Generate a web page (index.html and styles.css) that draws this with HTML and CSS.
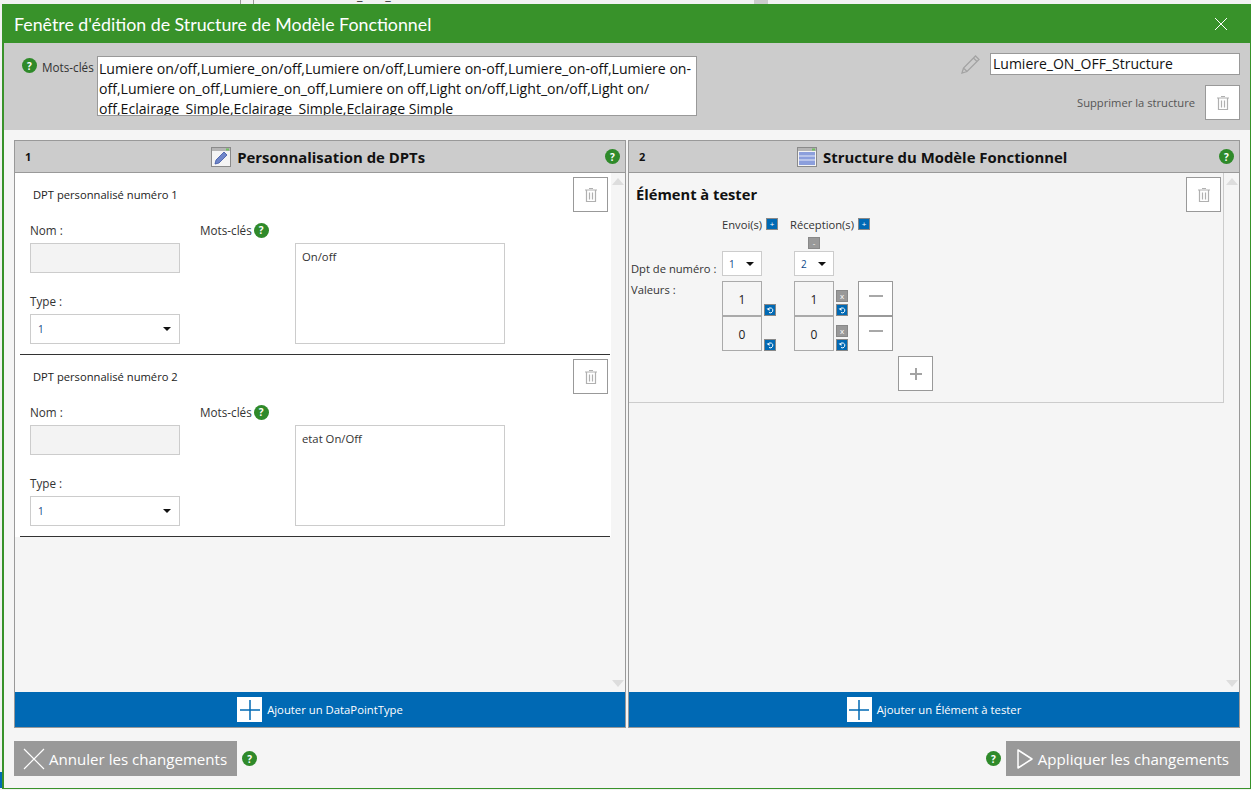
FILE: index.html
```html
<!DOCTYPE html>
<html lang="fr">
<head>
  <meta charset="UTF-8">
  <title>Fenêtre d'édition de Structure de Modèle Fonctionnel</title>
  <link rel="stylesheet" href="styles.css">
</head>
<body>

<svg class="sprite" width="0" height="0">
  <symbol id="trash" viewBox="0 0 14 16">
    <path d="M5 1.500h4M1 3h12M2.500 3v11.500h9V3M5.500 5.500v7M8.500 5.500v7" fill="none" stroke="currentColor" stroke-width="1.200"/>
  </symbol>
  <symbol id="undo" viewBox="0 0 12 12">
    <path d="M4 5.500a2.500 2.500 0 1 1 1 3" fill="none" stroke="#fff" stroke-width="1"/>
    <path d="M2.500 4.500h3v2.500z" fill="#fff"/>
  </symbol>
</svg>

<div class="behind">
  <span class="behind-line"></span>
  <span class="behind-line behind-line-2"></span>
  <span class="behind-text">M1 Lumiere ON_OFF_1</span>
  <span class="behind-box"></span>
</div>

<div class="window">
  <header class="titlebar">
    <h1>Fenêtre d'édition de Structure de Modèle Fonctionnel</h1>
    <svg class="close" width="14" height="14" viewBox="0 0 14 14"><path d="M1 1l12 12M13 1L1 13" stroke="#fff" fill="none"/></svg>
  </header>

  <section class="meta">
    <span class="help help-big">?</span>
    <span class="meta-label">Mots-clés</span>
    <div class="meta-keywords">Lumiere on/off,Lumiere_on/off,Lumiere on/off,Lumiere on-off,Lumiere_on-off,Lumiere on-<br>off,Lumiere on_off,Lumiere_on_off,Lumiere on off,Light on/off,Light_on/off,Light on/<br>off,Eclairage_Simple,Eclairage_Simple,Eclairage Simple</div>
    <div class="meta-side">
      <div class="meta-name">
        <svg width="20" height="20" viewBox="0 0 20 20"><path d="M1 19l1.500-5L14.500 2l3.500 3.500L6 17.500zM2.500 14L6 17.500M12.500 4l3.500 3.500" fill="none" stroke="#a3a3a3" stroke-width="1.300"/></svg>
        <div class="name-input">Lumiere_ON_OFF_Structure</div>
      </div>
      <div class="meta-delete">
        <span>Supprimer la structure</span>
        <button class="icon-btn"><svg width="14" height="16"><use href="#trash"/></svg></button>
      </div>
    </div>
  </section>

  <main class="panels">

    <section class="panel">
      <div class="panel-head">
        <span class="panel-num">1</span>
        <div class="panel-title">
          <svg width="20" height="20" viewBox="0 0 20 20">
            <rect x=".5" y=".5" width="19" height="19" fill="#f4f4f4" stroke="#8a8a8a"/>
            <rect x="1" y="1" width="18" height="3" fill="#b5b5b5"/>
            <rect x="15" y="1.500" width="3" height="2" fill="#6fbf5f"/>
            <path d="M4 17l1-4 8-8 3 3-8 8z" fill="#6f86c9" stroke="#3d55a5" stroke-width=".8"/>
          </svg>
          <h2>Personnalisation de DPTs</h2>
        </div>
        <span class="help">?</span>
      </div>
      <div class="panel-body">
        <div class="panel-content">

          <div class="dpt-wrap">
            <div class="dpt">
              <div class="dpt-top">
                <span class="dpt-name">DPT personnalisé numéro 1</span>
                <button class="icon-btn"><svg width="14" height="16"><use href="#trash"/></svg></button>
              </div>
              <div class="dpt-form">
                <label class="field-label">Nom :</label>
                <label class="field-label kw-label">Mots-clés <span class="help">?</span></label>
                <div class="name-box"></div>
                <div class="kw-box">On/off</div>
                <label class="field-label type-label">Type :</label>
                <div class="select type-select"><span>1</span><i class="caret"></i></div>
              </div>
            </div>
          </div>

          <div class="dpt-wrap">
            <div class="dpt">
              <div class="dpt-top">
                <span class="dpt-name">DPT personnalisé numéro 2</span>
                <button class="icon-btn"><svg width="14" height="16"><use href="#trash"/></svg></button>
              </div>
              <div class="dpt-form">
                <label class="field-label">Nom :</label>
                <label class="field-label kw-label">Mots-clés <span class="help">?</span></label>
                <div class="name-box"></div>
                <div class="kw-box">etat On/Off</div>
                <label class="field-label type-label">Type :</label>
                <div class="select type-select"><span>1</span><i class="caret"></i></div>
              </div>
            </div>
          </div>

        </div>
        <div class="scrollbar"><i class="arrow-up"></i><i class="arrow-down"></i></div>
      </div>
      <button class="add-bar">
        <span class="add-icon"><svg width="20" height="20" viewBox="0 0 20 20"><path d="M10 0v20M0 10h20" stroke="#0069b4" stroke-width="1.500"/></svg></span>
        Ajouter un DataPointType
      </button>
    </section>

    <section class="panel panel-right">
      <div class="panel-head">
        <span class="panel-num">2</span>
        <div class="panel-title">
          <svg width="20" height="20" viewBox="0 0 20 20">
            <rect x=".5" y=".5" width="19" height="19" fill="#f4f4f4" stroke="#8a8a8a"/>
            <rect x="1" y="1" width="18" height="3" fill="#b5b5b5"/>
            <rect x="15" y="1.500" width="3" height="2" fill="#6fbf5f"/>
            <rect x="2" y="5" width="16" height="13" fill="#8c9fdc"/>
            <path d="M2 9h16M2 13h16" stroke="#e6eaf7"/>
          </svg>
          <h2>Structure du Modèle Fonctionnel</h2>
        </div>
        <span class="help">?</span>
      </div>
      <div class="panel-body">
        <div class="panel-content">
          <div class="element">
            <div class="element-top">
              <h3>Élément à tester</h3>
              <button class="icon-btn"><svg width="14" height="16"><use href="#trash"/></svg></button>
            </div>
            <div class="matrix">
              <div class="col-head col-a">Envoi(s) <button class="tiny tiny-blue">+</button></div>
              <div class="col-head col-b">Réception(s) <button class="tiny tiny-blue">+</button></div>
              <button class="tiny tiny-gray remove-col">-</button>

              <span class="m-label dpt-label">Dpt de numéro :</span>
              <div class="select num-select col-a"><span>1</span><i class="caret"></i></div>
              <div class="select num-select col-b"><span>2</span><i class="caret"></i></div>

              <span class="m-label val-label">Valeurs :</span>

              <div class="val col-a r1">1</div>
              <div class="val-side side-a r1"><button class="tiny tiny-blue"><svg width="12" height="12"><use href="#undo"/></svg></button></div>
              <div class="val col-b r1">1</div>
              <div class="val-side side-b r1">
                <button class="tiny tiny-gray tiny-x">x</button>
                <button class="tiny tiny-blue"><svg width="12" height="12"><use href="#undo"/></svg></button>
              </div>
              <button class="icon-btn row-btn col-c r1"><i class="dash"></i></button>

              <div class="val col-a r2">0</div>
              <div class="val-side side-a r2"><button class="tiny tiny-blue"><svg width="12" height="12"><use href="#undo"/></svg></button></div>
              <div class="val col-b r2">0</div>
              <div class="val-side side-b r2">
                <button class="tiny tiny-gray tiny-x">x</button>
                <button class="tiny tiny-blue"><svg width="12" height="12"><use href="#undo"/></svg></button>
              </div>
              <button class="icon-btn row-btn col-c r2"><i class="dash"></i></button>

              <button class="icon-btn add-row">
                <svg width="14" height="14" viewBox="0 0 14 14"><path d="M7 1v12M1 7h12" stroke="#a3a3a3" stroke-width="2"/></svg>
              </button>
            </div>
          </div>
        </div>
        <div class="scrollbar"><i class="arrow-up"></i><i class="arrow-down"></i></div>
      </div>
      <button class="add-bar">
        <span class="add-icon"><svg width="20" height="20" viewBox="0 0 20 20"><path d="M10 0v20M0 10h20" stroke="#0069b4" stroke-width="1.500"/></svg></span>
        Ajouter un Élément à tester
      </button>
    </section>

  </main>

  <footer class="actions">
    <div class="action-group">
      <button class="action">
        <svg width="22" height="22" viewBox="0 0 22 22"><path d="M1 1l20 20M21 1L1 21" stroke="#fff" stroke-width="1.200" fill="none"/></svg>
        Annuler les changements
      </button>
      <span class="help">?</span>
    </div>
    <div class="action-group">
      <span class="help">?</span>
      <button class="action action-apply">
        <svg width="18" height="22" viewBox="0 0 18 22"><path d="M2 2v18l14-9z" stroke="#fff" stroke-width="1.500" stroke-linejoin="round" fill="none"/></svg>
        Appliquer les changements
      </button>
    </div>
  </footer>
</div>

</body>
</html>
```

FILE: styles.css
```css
* {
  box-sizing: border-box;
}
html, body {
  height: 100%;
}
body {
  margin: 0;
  overflow: hidden;
  font-family: "Open Sans", "Liberation Sans", sans-serif;
  font-size: 11.200px;
  color: #222;
  background: linear-gradient(#0069b4, #0069b4) 0 772px / 2px 16px no-repeat #f2f2f2;
}
button {
  font-family: inherit;
  padding: 0;
  cursor: pointer;
}
.sprite {
  display: block;
}

/* what shows of the window behind */
.behind {
  height: 4px;
  overflow: hidden;
  display: flex;
  padding-left: 240px;
}
.behind-line {
  width: 1px;
  background: #999;
}
.behind-line-2 {
  margin-left: 12px;
}
.behind-text {
  width: 489px;
  margin: -13px 0 0 11px;
  font-size: 12.500px;
  line-height: 18px;
}
.behind-box {
  width: 14px;
  background: #ccc;
}

.window {
  height: 785px;
  margin-left: 2px;
  display: flex;
  flex-direction: column;
  border: solid #38922a;
  border-width: 0 1px 1px 2px;
  background: #f5f5f5;
}
.titlebar {
  height: 39px;
  flex: none;
  display: flex;
  align-items: center;
  justify-content: space-between;
  padding: 0 22px 0 10px;
  background: #38922a;
  color: #fff;
}
.titlebar h1 {
  margin: 0;
  font-family: Lato, "Open Sans", sans-serif;
  font-size: 17.800px;
  font-weight: 400;
}

.help {
  display: inline-flex;
  flex: none;
  width: 15px;
  height: 15px;
  align-items: center;
  justify-content: center;
  border-radius: 50%;
  background: #2f8a2a;
  color: #fff;
  font-size: 10px;
  font-weight: 700;
  line-height: 1;
}

/* keywords + name strip */
.meta {
  height: 87px;
  flex: none;
  display: flex;
  padding: 13px 10px 0 18px;
  background: #ccc;
}
.meta .help-big {
  margin-top: 2px;
}
.meta-label {
  margin: 3px 3px 0 5px;
  width: 52px;
  font-size: 11.700px;
  white-space: nowrap;
  color: #333;
}
.meta-keywords {
  width: 600px;
  height: 60px;
  padding: 2px 0 0 1px;
  overflow: hidden;
  background: #fff;
  border: 1px solid #999;
  font-size: 14.100px;
  line-height: 20px;
  white-space: nowrap;
  color: #111;
}
.meta-side {
  margin-left: auto;
  margin-top: -3px;
}
.meta-name {
  display: flex;
  align-items: center;
  justify-content: flex-end;
  gap: 9px;
}
.name-input {
  width: 250px;
  height: 22px;
  padding-left: 2px;
  background: #fff;
  border: 1px solid #999;
  font-size: 14px;
  line-height: 20px;
  color: #111;
}
.meta-delete {
  display: flex;
  justify-content: flex-end;
  align-items: center;
  gap: 10px;
  margin-top: 10px;
  font-size: 11.200px;
  color: #555;
}

.icon-btn {
  width: 35px;
  height: 35px;
  flex: none;
  display: flex;
  align-items: center;
  justify-content: center;
  background: #fff;
  border: 1px solid #999;
  color: #b0b0b0;
}

/* the two panels */
.panels {
  flex: 1;
  min-height: 0;
  display: flex;
  gap: 2px;
  padding: 10px 10px 13px;
}
.panel {
  width: 612px;
  display: flex;
  flex-direction: column;
  border: 1px solid #999;
}
.panel-head {
  height: 32px;
  flex: none;
  display: flex;
  align-items: center;
  justify-content: space-between;
  padding: 0 5px 0 10px;
  background: #ccc;
  border-bottom: 1px solid #999;
}
.panel-num {
  font-size: 11px;
  font-weight: 700;
  color: #111;
}
.panel-title {
  display: flex;
  align-items: center;
  gap: 6px;
}
.panel-title h2 {
  margin: 0;
  font-size: 14.900px;
  font-weight: 700;
  color: #111;
}
.panel-body {
  flex: 1;
  min-height: 0;
  display: flex;
}
.panel-content {
  flex: 1;
}
.scrollbar {
  width: 14px;
  flex: none;
  display: flex;
  flex-direction: column;
  justify-content: space-between;
  align-items: center;
  padding: 5px 0;
}
.panel-right .scrollbar {
  width: 15px;
}
.arrow-up, .arrow-down {
  width: 0;
  height: 0;
  border-left: 6px solid transparent;
  border-right: 6px solid transparent;
}
.arrow-up {
  border-bottom: 7px solid #ddd;
}
.arrow-down {
  border-top: 7px solid #ddd;
}
.add-bar {
  height: 35px;
  flex: none;
  display: flex;
  align-items: center;
  justify-content: center;
  gap: 5px;
  border: none;
  background: #0069b4;
  color: #fff;
  font-size: 11.300px;
}
.add-icon {
  width: 25px;
  height: 25px;
  display: flex;
  align-items: center;
  justify-content: center;
  background: #fff;
}

/* DPT rows, left panel */
.dpt-wrap {
  height: 182px;
  padding: 0 1px 0 5px;
  background: #fff;
}
.dpt {
  height: 100%;
  padding-top: 4px;
  border-bottom: 1px solid #333;
}
.dpt-top {
  height: 35px;
  display: flex;
  align-items: center;
  justify-content: space-between;
  padding: 0 2px 0 13px;
}
.dpt-form {
  display: grid;
  grid-template-columns: 150px 20px 95px 210px;
  grid-template-rows: 31px 30px 41px 30px;
  margin-left: 10px;
}
.field-label {
  align-self: end;
  padding-bottom: 4px;
  line-height: 18px;
  font-size: 11.700px;
  color: #333;
}
.kw-label {
  display: flex;
  align-items: center;
  gap: 2px;
  grid-column: 3;
  grid-row: 1;
}
.type-label {
  grid-column: 1;
  grid-row: 3;
}
.name-box {
  grid-column: 1;
  grid-row: 2;
  background: #f3f3f3;
  border: 1px solid #ccc;
}
.kw-box {
  grid-column: 4;
  grid-row: 2 / 5;
  padding: 5px 6px;
  background: #fff;
  border: 1px solid #ccc;
  font-size: 11.300px;
  color: #333;
}
.select {
  display: flex;
  align-items: center;
  justify-content: space-between;
  background: #fff;
  border: 1px solid #ccc;
  color: #0f4a8a;
  font-size: 10px;
}
.type-select {
  grid-column: 1;
  grid-row: 4;
  padding: 0 8px 0 7px;
}
.caret {
  width: 0;
  height: 0;
  border-left: 4px solid transparent;
  border-right: 4px solid transparent;
  border-top: 4px solid #111;
}

/* element, right panel */
.element {
  height: 230px;
  padding: 4px 2px 0 2px;
  border: solid #ccc;
  border-width: 0 1px 1px 0;
}
.element-top {
  height: 35px;
  display: flex;
  align-items: center;
  justify-content: space-between;
  padding-left: 5px;
}
.element-top h3 {
  margin: 0 0 2px;
  font-size: 14.700px;
  font-weight: 700;
  color: #111;
}
.matrix {
  display: grid;
  grid-template-columns: 91px 40px 32px 40px 24px 35px 5px 35px;
  grid-template-rows: 3px 18px 18px 30px 35px 35px 5px 35px;
}
.col-a {
  grid-column: 2;
}
.col-b {
  grid-column: 4;
}
.col-c {
  grid-column: 6;
}
.r1 {
  grid-row: 5;
}
.r2 {
  grid-row: 6;
}
.col-head {
  grid-row: 2;
  display: flex;
  align-items: center;
  gap: 4px;
  white-space: nowrap;
  color: #333;
}
.col-head.col-b {
  margin-left: -4px;
}
.tiny {
  width: 12px;
  height: 12px;
  flex: none;
  display: flex;
  align-items: center;
  justify-content: center;
  border: 1px solid #888;
  color: #fff;
  font-size: 8px;
  line-height: 1;
}
.tiny svg {
  flex: none;
  margin: -1px;
}
.tiny-blue {
  background: #0069b4;
}
.tiny-gray {
  background: #999;
}
.tiny-x {
  margin-top: 9px;
}
.remove-col {
  grid-column: 4;
  grid-row: 3;
  margin: 4px 0 0 14px;
  align-self: start;
}
.m-label {
  grid-column: 1;
  color: #333;
}
.dpt-label {
  grid-row: 4;
  align-self: end;
  margin-bottom: 5px;
}
.val-label {
  grid-row: 5;
  margin-top: 1px;
}
.num-select {
  grid-row: 4;
  height: 25px;
  padding: 0 7px 0 6px;
}
.val {
  display: flex;
  align-items: center;
  justify-content: center;
  padding-top: 2px;
  border: 1px solid #aaa;
  color: #222;
  font-size: 12px;
}
.val-side {
  display: flex;
  flex-direction: column;
  justify-content: flex-end;
  gap: 2px;
}
.side-a {
  grid-column: 3;
  padding-left: 2px;
}
.side-b {
  grid-column: 5;
  padding-left: 2px;
}
.row-btn {
  align-items: flex-start;
  padding-top: 13px;
}
.dash {
  width: 14px;
  height: 2px;
  background: #a8a8a8;
}
.add-row {
  grid-column: 8;
  grid-row: 8;
}

/* bottom buttons */
.actions {
  height: 47px;
  flex: none;
  display: flex;
  justify-content: space-between;
  padding: 0 10px;
}
.action-group {
  display: flex;
  align-items: center;
  gap: 5px;
  height: 35px;
}
.action {
  height: 35px;
  display: flex;
  align-items: center;
  gap: 4px;
  padding: 0 10px 0 9px;
  border: none;
  background: #999;
  color: #fff;
  font-size: 15.100px;
}
.action-apply {
  padding: 0 11px 0 10px;
}
```
